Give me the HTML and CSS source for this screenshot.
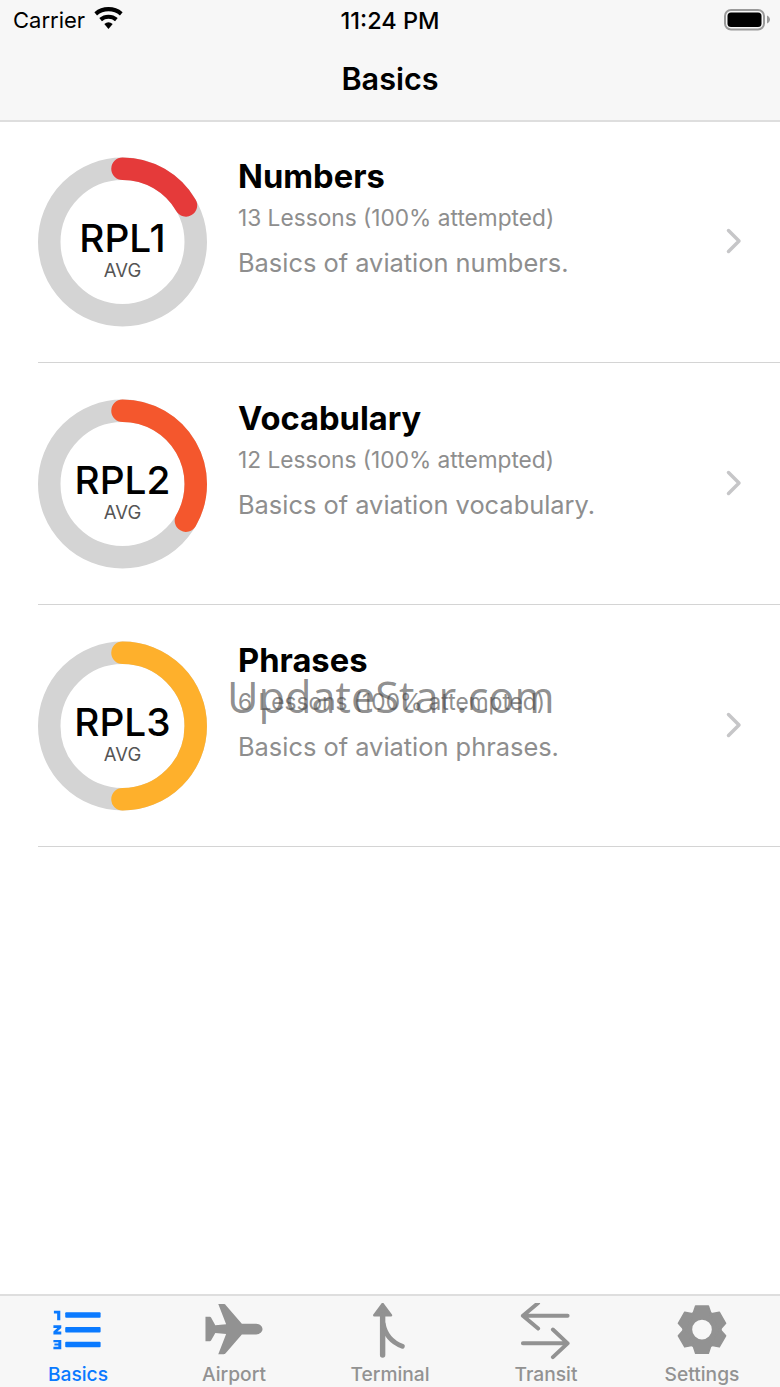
FILE: index.html
```html
<!DOCTYPE html>
<html lang="en">
<head>
<meta charset="utf-8">
<title>Basics</title>
<link rel="stylesheet" href="styles.css">
</head>
<body>
<div class="app">
  <header class="top">
    <div class="status">
      <div class="status-left">
        <span>Carrier</span>
        <svg class="wifi" viewBox="1 0 28 21.500"><path d="M15 21.500 10.900 16.600a6.400 6.400 0 0 1 8.200 0Z"/><path d="M8.600 13.900 6 10.800a14 14 0 0 1 18 0l-2.600 3.100a10 10 0 0 0-12.800 0Z"/><path d="M3.800 8.200 1.200 5.100a21.600 21.600 0 0 1 27.600 0l-2.600 3.100a17.600 17.600 0 0 0-22.400 0Z"/></svg>
      </div>
      <div class="status-time">11:24 PM</div>
      <div class="status-right">
        <svg class="battery" viewBox="0 0 47 22"><rect x="1" y="1" width="39" height="19.500" rx="6" fill="none" stroke="#9a9a9a" stroke-width="2"/><rect x="3.500" y="3.500" width="34" height="14.500" rx="3.500" fill="#000"/><path d="M43 6.500c2 1 3 2.500 3 4s-1 3-3 4Z" fill="#9a9a9a"/></svg>
      </div>
    </div>
    <h1 class="nav-title">Basics</h1>
  </header>

  <main class="list">
    <a class="row">
      <div class="ring">
        <svg viewBox="0 0 170 170"><circle class="track" cx="84.500" cy="85" r="73.250"/><path class="arc arc-red" d="M84.500 11.750A73.250 73.250 0 0 1 147.940 48.370"/></svg>
        <div class="ring-label"><span class="ring-code">RPL1</span><span class="ring-avg">AVG</span></div>
      </div>
      <div class="info">
        <h2 class="info-title">Numbers</h2>
        <p class="info-sub">13 Lessons (100% attempted)</p>
        <p class="info-desc">Basics of aviation numbers.</p>
      </div>
      <svg class="chev" viewBox="0 0 16 26"><path d="M2.500 2.500 13 13 2.500 23.500"/></svg>
    </a>
    <a class="row">
      <div class="ring">
        <svg viewBox="0 0 170 170"><circle class="track" cx="84.500" cy="85" r="73.250"/><path class="arc arc-orange" d="M84.500 11.750A73.250 73.250 0 0 1 147.940 121.630"/></svg>
        <div class="ring-label"><span class="ring-code">RPL2</span><span class="ring-avg">AVG</span></div>
      </div>
      <div class="info">
        <h2 class="info-title">Vocabulary</h2>
        <p class="info-sub">12 Lessons (100% attempted)</p>
        <p class="info-desc">Basics of aviation vocabulary.</p>
      </div>
      <svg class="chev" viewBox="0 0 16 26"><path d="M2.500 2.500 13 13 2.500 23.500"/></svg>
    </a>
    <a class="row">
      <div class="ring">
        <svg viewBox="0 0 170 170"><circle class="track" cx="84.500" cy="85" r="73.250"/><path class="arc arc-amber" d="M84.500 11.750A73.250 73.250 0 0 1 84.500 158.250"/></svg>
        <div class="ring-label"><span class="ring-code">RPL3</span><span class="ring-avg">AVG</span></div>
      </div>
      <div class="info">
        <h2 class="info-title">Phrases</h2>
        <p class="info-sub">6 Lessons (100% attempted)</p>
        <p class="info-desc">Basics of aviation phrases.</p>
      </div>
      <svg class="chev" viewBox="0 0 16 26"><path d="M2.500 2.500 13 13 2.500 23.500"/></svg>
    </a>
  </main>

  <nav class="tabs">
    <a class="tab tab-active">
      <svg class="tab-icon" viewBox="0 0 60 60">
        <rect x="17" y="9.500" width="36" height="5.500" rx="1" fill="currentColor"/>
        <rect x="17" y="24.500" width="36" height="5.500" rx="1" fill="currentColor"/>
        <rect x="17" y="39.500" width="36" height="5.500" rx="1" fill="currentColor"/>
        <path d="M5.500 8H12V17.500H8.800V10.700H5.500ZM5 22.500H13V25.500L9 29H13V32H5V29L9 25.500H5ZM5 37.500H13V47H5V44.500H10V43.300H6V41.200H10V40H5Z" fill="currentColor"/>
      </svg>
      <span>Basics</span>
    </a>
    <a class="tab">
      <svg class="tab-icon" viewBox="0 0 60 60">
        <path d="M14 1H19.500C20.500 1 21 1.300 21.700 2.200L38 21H52.500C56.500 21 59 24 59 26.500S56.500 32 52.500 32H38L21.700 50.800C21 51.700 20.500 52 19.500 52H14L22 31.500 11 30.500 6.800 38C6.300 38.800 5.800 39 5 39H1V14H5C5.800 14 6.300 14.200 6.800 15L11 22.500 22 21.500Z" fill="currentColor"/>
      </svg>
      <span>Airport</span>
    </a>
    <a class="tab">
      <svg class="tab-icon" viewBox="0 0 60 60">
        <path d="M22.500 1 31 12.500H14Z" fill="currentColor" stroke="currentColor" stroke-width="2.500" stroke-linejoin="round"/>
        <path d="M22.500 12V53" fill="none" stroke="currentColor" stroke-width="5.500" stroke-linecap="round"/>
        <path d="M23 21C25 32 32 40 42.500 44" fill="none" stroke="currentColor" stroke-width="5" stroke-linecap="round"/>
      </svg>
      <span>Terminal</span>
    </a>
    <a class="tab">
      <svg class="tab-icon" viewBox="0 0 60 60">
        <path d="M52 13H6.500M22 0 6.500 13 22 26M6.500 41H52M37 27 52 41 37 55" fill="none" stroke="currentColor" stroke-width="4" stroke-linecap="round" stroke-linejoin="round"/>
      </svg>
      <span>Transit</span>
    </a>
    <a class="tab">
      <svg class="tab-icon" viewBox="0 0 60 60">
        <g transform="translate(30 27)" fill="currentColor" stroke="currentColor" stroke-width="1.500" stroke-linejoin="round">
          <circle r="15" fill="none" stroke-width="10"/>
          <path d="M-6.500-24H6.500L9.500-15H-9.500Z"/>
          <path transform="rotate(60)" d="M-6.500-24H6.500L9.500-15H-9.500Z"/>
          <path transform="rotate(120)" d="M-6.500-24H6.500L9.500-15H-9.500Z"/>
          <path transform="rotate(180)" d="M-6.500-24H6.500L9.500-15H-9.500Z"/>
          <path transform="rotate(240)" d="M-6.500-24H6.500L9.500-15H-9.500Z"/>
          <path transform="rotate(300)" d="M-6.500-24H6.500L9.500-15H-9.500Z"/>
        </g>
      </svg>
      <span>Settings</span>
    </a>
  </nav>

  <div class="watermark">UpdateStar.com</div>
</div>
</body>
</html>
```

FILE: styles.css
```css
* { box-sizing: border-box; }
html, body { margin: 0; padding: 0; }
body { background: #fff; font-family: Inter, "Liberation Sans", sans-serif; color: #000; }
.app { position: relative; width: 780px; height: 1387px; display: flex; flex-direction: column; overflow: hidden; }

.top { height: 122px; background: #f7f7f7; border-bottom: 2px solid #dedede; flex: none; }
.status { height: 40px; display: grid; grid-template-columns: 1fr auto 1fr; align-items: center; padding: 0 9px; font-size: 22px; }
.status-left { display: flex; align-items: center; gap: 9px; padding-left: 4px; }
.status-time { font-size: 23.500px; font-weight: 500; }
.status-right { display: flex; justify-content: flex-end; }
.wifi { width: 29px; height: 22px; fill: #000; margin-top: -4px; }
.battery { width: 47px; height: 22px; }
.nav-title { margin: 0; height: 80px; line-height: 78px; text-align: center; font-size: 30.600px; font-weight: 600; }

.list { flex: 1; display: flex; flex-direction: column; padding-left: 38px; margin-top: -1px; }
.row { height: 242px; flex: none; display: flex; align-items: flex-start; border-bottom: 1px solid #d4d4d4; padding-top: 36px; padding-right: 38px; }
.ring { position: relative; width: 170px; height: 170px; flex: none; }
.ring svg { display: block; width: 170px; height: 170px; }
.track { fill: none; stroke: #d4d4d4; stroke-width: 22.500; }
.arc { fill: none; stroke-width: 22.500; stroke-linecap: round; }
.arc-red { stroke: #e53a3a; }
.arc-orange { stroke: #f4572d; }
.arc-amber { stroke: #feb02c; }
.ring-label { position: absolute; inset: 0; padding-right: 1px; display: flex; flex-direction: column; align-items: center; justify-content: center; }
.ring-code { font-size: 38.800px; font-weight: 500; line-height: 44px; margin-top: 11px; }
.ring-avg { font-size: 18.500px; line-height: 20px; color: #555; }

.info { flex: 1; margin-left: 30px; margin-top: -2px; }
.info-title { margin: 0; font-size: 32.700px; line-height: 42px; font-weight: 700; }
.info-sub { margin: 0 0 2px; padding-top: 1px; font-size: 22.700px; line-height: 40px; color: #8e8e8e; }
.info-desc { margin: 0; font-size: 25.400px; line-height: 46px; color: #8e8e8e; }
.chev { width: 16px; height: 26px; margin-top: 71px; fill: none; stroke: #c6c6c8; stroke-width: 3.500; stroke-linecap: round; stroke-linejoin: round; }

.tabs { height: 93px; flex: none; display: grid; grid-template-columns: repeat(5, 1fr); background: #f7f7f7; border-top: 2px solid #dedede; }
.tab { display: flex; flex-direction: column; align-items: center; color: #929292; font-size: 19.200px; font-weight: 500; padding-top: 7px; }
.tab-active { color: #0a7aff; }
.tab-icon { width: 60px; height: 59px; display: block; }
.watermark { position: absolute; left: 227px; top: 668px; font-family: "Open Sans", sans-serif; font-size: 43.300px; line-height: 58px; color: rgba(70, 70, 70, .62); white-space: nowrap; }
```
